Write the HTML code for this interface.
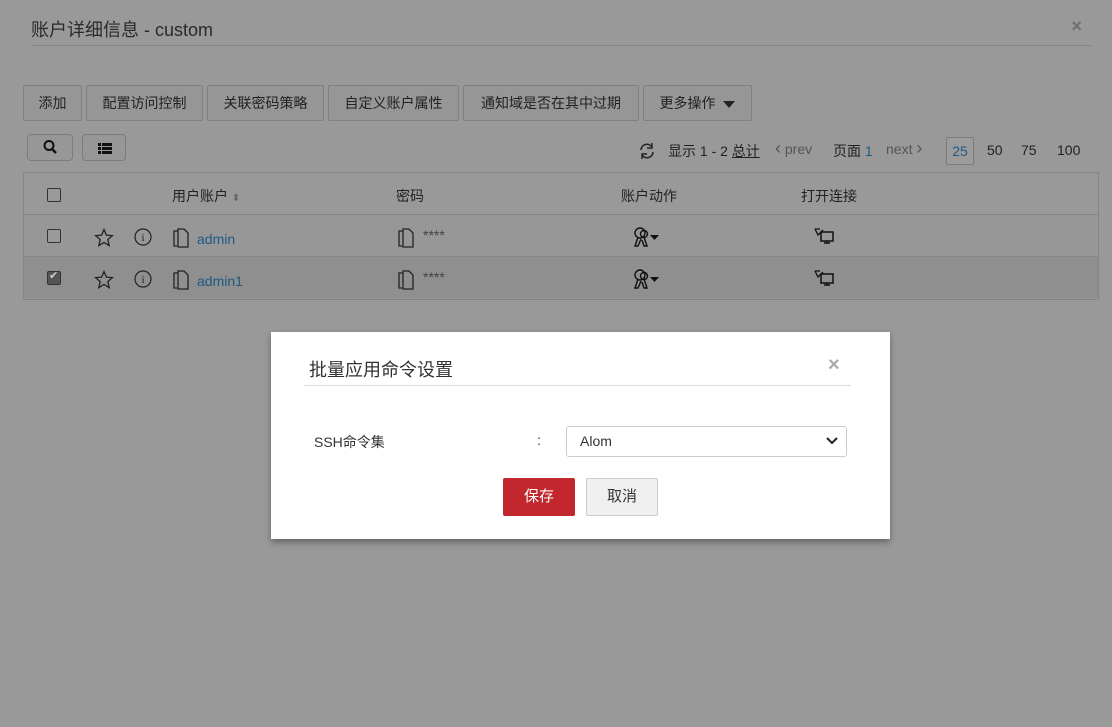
<!DOCTYPE html>
<html><head><meta charset="utf-8"><style>
*{box-sizing:border-box;margin:0;padding:0}
body{width:1112px;height:727px;background:#999;font-family:"Liberation Sans","Noto Sans CJK SC",sans-serif;color:#222;position:relative;overflow:hidden;font-size:14px}
.abs{position:absolute}
.title{left:31px;top:16px;font-size:18px;color:#2a2a2a}
.hr{left:31px;top:45px;width:1060px;height:1px;background:#848484}
.x{right:30px;top:16px;font-size:18px;color:#6e6e6e;font-weight:bold}
.btn{position:absolute;top:85px;height:36px;border:1px solid #808080;border-radius:2px;background:#969696;font-size:14px;line-height:34px;text-align:center;color:#222}
.sbtn{position:absolute;top:134px;height:27px;border:1px solid #7c7c7c;border-radius:4px;background:#979797}
.tbl{left:23px;top:172px;width:1076px;height:128px;border:1px solid #858585}
.row{position:absolute;left:0;width:1074px;height:42px;border-top:1px solid #868686}
.cb{position:absolute;width:14px;height:14px;border:1px solid #333;border-radius:2px;background:#9a9a9a}
.t{position:absolute;font-size:14px;color:#222}
.link{color:#1e5a85}
.pg{position:absolute;top:141px;font-size:14px;color:#222}
.modal{left:271px;top:332px;width:619px;height:207px;background:#fff;box-shadow:0 3px 6px rgba(0,0,0,.35)}
</style></head><body>
<div class="abs title">账户详细信息 - custom</div>
<div class="abs x">×</div>
<div class="abs hr"></div>

<div class="btn" style="left:23px;width:59px">添加</div>
<div class="btn" style="left:86px;width:117px">配置访问控制</div>
<div class="btn" style="left:207px;width:117px">关联密码策略</div>
<div class="btn" style="left:328px;width:131px">自定义账户属性</div>
<div class="btn" style="left:463px;width:176px">通知域是否在其中过期</div>
<div class="btn" style="left:643px;width:109px">更多操作 <span style="display:inline-block;border-left:6px solid transparent;border-right:6px solid transparent;border-top:7px solid #222;vertical-align:middle;margin-left:4px"></span></div>

<div class="sbtn" style="left:27px;width:46px"><svg width="46" height="25" viewBox="0 0 46 25"><circle cx="21" cy="10.5" r="4.5" fill="none" stroke="#111" stroke-width="2"/><path d="M24 14l4 4" stroke="#111" stroke-width="2.5"/></svg></div>
<div class="sbtn" style="left:82px;width:44px"><svg width="44" height="25" viewBox="0 0 44 25"><g fill="#111"><rect x="15" y="8" width="3" height="3"/><rect x="19" y="8" width="10" height="3"/><rect x="15" y="12" width="3" height="3"/><rect x="19" y="12" width="10" height="3"/><rect x="15" y="16" width="3" height="3"/><rect x="19" y="16" width="10" height="3"/></g></svg></div>

<svg class="abs" style="left:638px;top:142px" width="18" height="18" viewBox="0 0 18 18"><path d="M3 8a6 6 0 0 1 11-3M15 10a6 6 0 0 1-11 3" fill="none" stroke="#222" stroke-width="1.6"/><path d="M14 1v5h-5M4 17v-5h5" fill="none" stroke="#222" stroke-width="1.4"/></svg>
<div class="pg" style="left:668px">显示 1 - 2 <u>总计</u></div>
<div class="pg" style="left:775px;color:#555"><span style="font-size:18px;line-height:14px">‹</span> prev</div>
<div class="pg" style="left:833px">页面 <span style="color:#1e5a85">1</span></div>
<div class="pg" style="left:886px;color:#555">next <span style="font-size:18px;line-height:14px">›</span></div>
<div class="abs" style="left:946px;top:137px;width:28px;height:28px;border:1px solid #7c7c7c;border-radius:2px;background:#9c9c9c;color:#1e5a85;font-size:14px;line-height:26px;text-align:center">25</div>
<div class="pg" style="left:987px;top:142px">50</div>
<div class="pg" style="left:1021px;top:142px">75</div>
<div class="pg" style="left:1057px;top:142px">100</div>

<svg width="0" height="0" style="position:absolute"><defs>
<g id="key"><circle cx="7" cy="6" r="5" fill="none" stroke="#111" stroke-width="1.4"/><circle cx="11" cy="7" r="3.5" fill="none" stroke="#111" stroke-width="1.4"/><path d="M5 10l-3 9h3l3-7M11 10l3 9h-3l-2-6" fill="none" stroke="#111" stroke-width="1.4"/><path d="M17 8h9l-4.5 5z" fill="#111"/></g>
<g id="mon"><rect x="7" y="5" width="12" height="9" fill="none" stroke="#111" stroke-width="1.5"/><path d="M10 16h6M13 14v2" stroke="#111" stroke-width="1.5"/><path d="M1 2l3 6 5-5M1 2h5" fill="none" stroke="#111" stroke-width="1.3"/></g>
<g id="doc"><path d="M5 3H1v15h3M5 1h6l4 4v14H5z" fill="none" stroke="#222" stroke-width="1.3"/></g>
</defs></svg>

<div class="abs tbl">
  <div class="cb" style="left:23px;top:15px"></div>
  <div class="t" style="left:148px;top:13px">用户账户 <span style="color:#666;font-size:10px">⬍</span></div>
  <div class="t" style="left:372px;top:13px">密码</div>
  <div class="t" style="left:597px;top:13px">账户动作</div>
  <div class="t" style="left:777px;top:13px">打开连接</div>
  <div class="row" style="top:41px;background:#979797">
    <div class="cb" style="left:23px;top:14px"></div>
    <svg class="abs" style="left:70px;top:13px" width="20" height="19"><path d="M10 1.5l2.4 5.6 6 .5-4.6 4 1.4 6L10 14.5 4.8 17.6l1.4-6-4.6-4 6-.5z" fill="none" stroke="#222" stroke-width="1.3"/></svg>
    <svg class="abs" style="left:110px;top:13px" width="18" height="18"><circle cx="9" cy="9" r="8" fill="none" stroke="#222" stroke-width="1.2"/><text x="9" y="13" font-size="11" text-anchor="middle" font-family="Liberation Serif" fill="#222">i</text></svg>
    <svg class="abs" style="left:149px;top:13px" width="18" height="20"><use href="#doc"/></svg>
    <div class="t link" style="left:173px;top:16px">admin</div>
    <svg class="abs" style="left:374px;top:13px" width="18" height="20"><use href="#doc"/></svg>
    <div class="t" style="left:399px;top:12px;color:#444">****</div>
    <svg class="abs" style="left:609px;top:12px" width="28" height="22"><use href="#key"/></svg>
    <svg class="abs" style="left:790px;top:12px" width="22" height="20"><use href="#mon"/></svg>
  </div>
  <div class="row" style="top:83px;background:#8f8f8f">
    <div class="cb" style="left:23px;top:14px;background:#555"><span style="position:absolute;left:1px;top:-3px;color:#ccc;font-size:11px">✔</span></div>
    <svg class="abs" style="left:70px;top:13px" width="20" height="19"><path d="M10 1.5l2.4 5.6 6 .5-4.6 4 1.4 6L10 14.5 4.8 17.6l1.4-6-4.6-4 6-.5z" fill="none" stroke="#222" stroke-width="1.3"/></svg>
    <svg class="abs" style="left:110px;top:13px" width="18" height="18"><circle cx="9" cy="9" r="8" fill="none" stroke="#222" stroke-width="1.2"/><text x="9" y="13" font-size="11" text-anchor="middle" font-family="Liberation Serif" fill="#222">i</text></svg>
    <svg class="abs" style="left:149px;top:13px" width="18" height="20"><use href="#doc"/></svg>
    <div class="t link" style="left:173px;top:16px">admin1</div>
    <svg class="abs" style="left:374px;top:13px" width="18" height="20"><use href="#doc"/></svg>
    <div class="t" style="left:399px;top:12px;color:#444">****</div>
    <svg class="abs" style="left:609px;top:12px" width="28" height="22"><use href="#key"/></svg>
    <svg class="abs" style="left:790px;top:12px" width="22" height="20"><use href="#mon"/></svg>
  </div>
</div>

<div class="abs modal">
  <div class="abs" style="left:38px;top:24px;font-size:18px;color:#333">批量应用命令设置</div>
  <div class="abs" style="left:557px;top:22px;font-size:20px;color:#aaa;font-weight:bold">×</div>
  <div class="abs" style="left:33px;top:53px;width:547px;height:1px;background:#ddd"></div>
  <div class="abs" style="left:43px;top:100px;font-size:14px;color:#333">SSH命令集</div>
  <div class="abs" style="left:266px;top:100px;font-size:14px;color:#333">:</div>
  <div class="abs" style="left:295px;top:94px;width:281px;height:31px;border:1px solid #ccc;border-radius:3px;font-size:14px;color:#333;line-height:29px;padding-left:13px">Alom
    <svg style="position:absolute;right:8px;top:10px" width="12" height="8"><path d="M1 1l5 5 5-5" fill="none" stroke="#222" stroke-width="2"/></svg></div>
  <div class="abs" style="left:232px;top:146px;width:72px;height:38px;background:#c1272d;border-radius:2px;color:#fff;font-size:15px;text-align:center;line-height:38px">保存</div>
  <div class="abs" style="left:315px;top:146px;width:72px;height:38px;background:#f0f0f0;border:1px solid #ccc;border-radius:2px;color:#333;font-size:15px;text-align:center;line-height:36px">取消</div>
</div>
</body></html>
